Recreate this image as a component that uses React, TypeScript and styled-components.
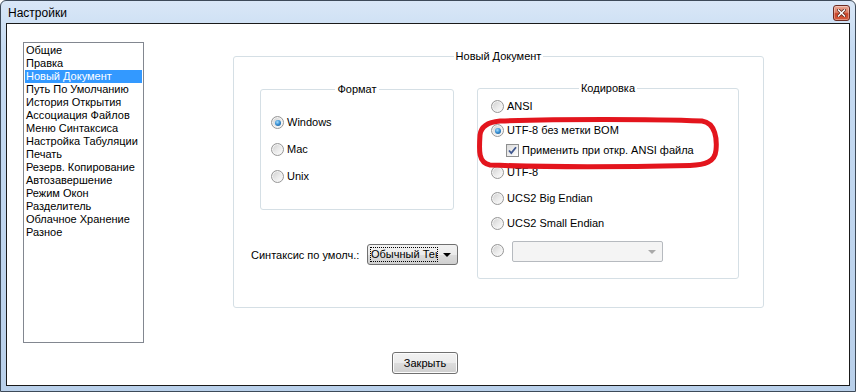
import styled, { createGlobalStyle } from "styled-components";

const GlobalStyle = createGlobalStyle`
  html, body {
    margin: 0;
    padding: 0;
    background: #fff;
  }
  body {
    font-family: "Liberation Sans", Arial, sans-serif;
    font-size: 11px;
    color: #000;
  }
  * {
    box-sizing: border-box;
  }
`;

const pages = [
  "Общие",
  "Правка",
  "Новый Документ",
  "Путь По Умолчанию",
  "История Открытия",
  "Ассоциация Файлов",
  "Меню Синтаксиса",
  "Настройка Табуляции",
  "Печать",
  "Резерв. Копирование",
  "Автозавершение",
  "Режим Окон",
  "Разделитель",
  "Облачное Хранение",
  "Разное",
];

const App = () => {
  return (
    <>
      <GlobalStyle />
      <Window>
        <TitleBar>
          <TitleText>Настройки</TitleText>
          <CloseButton aria-label="close">
            <svg width="9" height="8" viewBox="0 0 9 8">
              <path
                d="M1.5 1 L7.5 7 M7.5 1 L1.5 7"
                stroke="#5a2418"
                strokeWidth="3"
                strokeLinecap="square"
              />
              <path
                d="M1.5 1 L7.5 7 M7.5 1 L1.5 7"
                stroke="#fff"
                strokeWidth="1.5"
                strokeLinecap="square"
              />
            </svg>
          </CloseButton>
        </TitleBar>

        <Client>
          <Body>
            <ListBox>
              {pages.map((p) => (
                <ListItem key={p} $selected={p === "Новый Документ"}>
                  {p}
                </ListItem>
              ))}
            </ListBox>

            <Group $w={531} $h={252} $ml={89} $mt={14}>
              <GroupTitle>Новый Документ</GroupTitle>
              <GroupBody>
                <LeftColumn>
                  <Group $w={194} $h={121} $ml={9} $mt={0}>
                    <GroupTitle>Формат</GroupTitle>
                    <FormatList>
                      <OptionRow>
                        <Radio $checked />
                        <span>Windows</span>
                      </OptionRow>
                      <OptionRow>
                        <Radio />
                        <span>Mac</span>
                      </OptionRow>
                      <OptionRow>
                        <Radio />
                        <span>Unix</span>
                      </OptionRow>
                    </FormatList>
                  </Group>

                  <SyntaxRow>
                    <span>Синтаксис по умолч.:</span>
                    <Combo>
                      <ComboFocus>Обычный Текст</ComboFocus>
                      <ComboArrow $disabled={false} />
                    </Combo>
                  </SyntaxRow>
                </LeftColumn>

                <Group $w={262} $h={191} $ml={23} $mt={-1}>
                  <GroupTitle>Кодировка</GroupTitle>
                  <EncodingList>
                    <OptionRow $mt={5}>
                      <Radio />
                      <span>ANSI</span>
                    </OptionRow>
                    <OptionRow $mt={11}>
                      <Radio $checked />
                      <span>UTF-8 без метки BOM</span>
                    </OptionRow>
                    <CheckRow $mt={7}>
                      <Checkbox>
                        <svg width="11" height="11" viewBox="0 0 11 11">
                          <path
                            d="M2 5.5 L4.3 8 L9 2.2"
                            fill="none"
                            stroke="#3f578f"
                            strokeWidth="1.8"
                          />
                        </svg>
                      </Checkbox>
                      <span>Применить при откр. ANSI файла</span>
                    </CheckRow>
                    <OptionRow $mt={9}>
                      <Radio />
                      <span>UTF-8</span>
                    </OptionRow>
                    <OptionRow $mt={13}>
                      <Radio />
                      <span>UCS2 Big Endian</span>
                    </OptionRow>
                    <OptionRow $mt={12}>
                      <Radio />
                      <span>UCS2 Small Endian</span>
                    </OptionRow>
                    <OtherRow>
                      <Radio />
                      <DisabledCombo>
                        <ComboArrow $disabled />
                      </DisabledCombo>
                    </OtherRow>
                  </EncodingList>
                </Group>
              </GroupBody>
            </Group>
          </Body>

          <Footer>
            <PushButton>Закрыть</PushButton>
          </Footer>
        </Client>

        <Annotation width="856" height="392" viewBox="0 0 856 392">
          <path
            d="M500 121 C560 119, 650 119, 702 121 C716 123, 717 140, 716 150 C715 162, 705 165, 690 165.5 C620 167, 540 167, 490 165 C478 163, 479 150, 480 135 C481 126, 488 122, 500 121 Z"
            fill="none"
            stroke="#e3151d"
            strokeWidth="5"
          />
        </Annotation>
      </Window>
    </>
  );
};

const Window = styled.div`
  position: relative;
  width: 856px;
  height: 392px;
  border: 1px solid #3d4a59;
  border-radius: 6px 6px 0 0;
  background: linear-gradient(180deg, #d9e7f7 0%, #c6dbf2 12%, #bfd5ee 60%, #b9d0ea 100%);
  display: flex;
  flex-direction: column;
  padding: 0 5px 5px 5px;
`;

const TitleBar = styled.div`
  height: 22px;
  flex-shrink: 0;
  display: flex;
  justify-content: space-between;
  align-items: flex-start;
`;

const TitleText = styled.div`
  margin-top: 5px;
  padding-left: 2px;
  font-size: 12px;
  line-height: 14px;
  color: #000;
`;

const CloseButton = styled.div`
  margin-top: 4px;
  width: 17px;
  height: 16px;
  border: 1px solid #6b2b22;
  border-radius: 3px;
  background: linear-gradient(180deg, #eaa894 0%, #dc7c63 45%, #c9442a 55%, #d65a3a 100%);
  box-shadow: inset 0 0 0 1px rgba(255, 255, 255, 0.35);
  display: flex;
  align-items: center;
  justify-content: center;
`;

const Client = styled.div`
  flex: 1;
  background: #fff;
  border: 1px solid #1a1a1a;
  display: flex;
  flex-direction: column;
`;

const Body = styled.div`
  display: flex;
  align-items: flex-start;
  padding: 18px 0 0 16px;
`;

const ListBox = styled.div`
  width: 121px;
  height: 301px;
  flex-shrink: 0;
  border: 1px solid #828790;
  padding: 1px;
`;

const ListItem = styled.div<{ $selected: boolean }>`
  height: 13px;
  line-height: 13px;
  padding-left: 1px;
  white-space: nowrap;
  background: ${(p) => (p.$selected ? "#3399ff" : "transparent")};
  color: ${(p) => (p.$selected ? "#fff" : "#000")};
`;

const Group = styled.div<{ $w: number; $h: number; $ml: number; $mt: number }>`
  width: ${(p) => p.$w}px;
  height: ${(p) => p.$h}px;
  margin-left: ${(p) => p.$ml}px;
  margin-top: ${(p) => p.$mt}px;
  flex-shrink: 0;
  border: 1px solid #d5dfe5;
  border-radius: 3px;
  display: flex;
  flex-direction: column;
`;

const GroupTitle = styled.div`
  align-self: center;
  margin-top: -7px;
  height: 13px;
  line-height: 13px;
  padding: 0 2px;
  background: #fff;
  white-space: nowrap;
`;

const GroupBody = styled.div`
  display: flex;
  align-items: flex-start;
  padding-left: 17px;
  margin-top: 26px;
`;

const LeftColumn = styled.div`
  width: 203px;
  flex-shrink: 0;
  display: flex;
  flex-direction: column;
`;

const FormatList = styled.div`
  display: flex;
  flex-direction: column;
  gap: 14px;
  padding-left: 10px;
  margin-top: 20px;
`;

const EncodingList = styled.div`
  display: flex;
  flex-direction: column;
  padding-left: 13px;
`;

const OptionRow = styled.div<{ $mt?: number }>`
  display: flex;
  align-items: center;
  gap: 3px;
  height: 13px;
  line-height: 13px;
  margin-top: ${(p) => p.$mt ?? 0}px;
  white-space: nowrap;
`;

const CheckRow = styled(OptionRow)`
  padding-left: 15px;
  gap: 3px;
`;

const OtherRow = styled.div`
  display: flex;
  align-items: flex-start;
  gap: 8px;
  margin-top: 11px;

  & > span:first-child {
    margin-top: 3px;
  }
`;

const Radio = styled.span<{ $checked?: boolean }>`
  position: relative;
  width: 13px;
  height: 13px;
  flex-shrink: 0;
  border-radius: 50%;
  border: 1px solid #979797;
  background: linear-gradient(135deg, #cdcdcd 0%, #e9e9e9 50%, #ffffff 100%);
  box-shadow: inset 0 0 0 1px #f4f4f4;

  &::after {
    content: "";
    display: ${(p) => (p.$checked ? "block" : "none")};
    position: absolute;
    left: 2.5px;
    top: 2.5px;
    width: 6px;
    height: 6px;
    border-radius: 50%;
    background: radial-gradient(circle at 40% 35%, #a8defc 0%, #3c93d6 45%, #0f4c86 100%);
  }
`;

const Checkbox = styled.span`
  width: 13px;
  height: 13px;
  flex-shrink: 0;
  border: 1px solid #8e8f8f;
  background: linear-gradient(135deg, #dadada 0%, #f0f0f0 60%, #ffffff 100%);
  display: flex;
  align-items: center;
  justify-content: center;
`;

const SyntaxRow = styled.div`
  display: grid;
  grid-template-columns: 116px 91px;
  align-items: center;
  margin-top: 34px;
  white-space: nowrap;
`;

const Combo = styled.div`
  width: 91px;
  height: 21px;
  border: 1px solid #707070;
  border-radius: 3px;
  background: linear-gradient(180deg, #f2f2f2 0%, #ebebeb 50%, #dddddd 50%, #cfcfcf 100%);
  display: flex;
  align-items: center;
  padding: 2px 6px 2px 2px;
`;

const ComboFocus = styled.div`
  width: 68px;
  height: 15px;
  line-height: 13px;
  border: 1px dotted #000;
  overflow: hidden;
  white-space: nowrap;
`;

const ComboArrow = styled.span<{ $disabled: boolean }>`
  margin-left: auto;
  width: 0;
  height: 0;
  border-left: 4px solid transparent;
  border-right: 4px solid transparent;
  border-top: 4px solid ${(p) => (p.$disabled ? "#a9a9a9" : "#000")};
`;

const DisabledCombo = styled.div`
  width: 151px;
  height: 21px;
  border: 1px solid #b6babf;
  border-radius: 2px;
  background: #f4f4f4;
  display: flex;
  align-items: center;
  padding-right: 6px;
`;

const Footer = styled.div`
  display: flex;
  justify-content: center;
  padding-right: 6px;
  margin-top: 9px;
`;

const PushButton = styled.div`
  width: 66px;
  height: 22px;
  border: 1px solid #707070;
  border-radius: 3px;
  background: linear-gradient(180deg, #f2f2f2 0%, #ebebeb 50%, #dddddd 50%, #cfcfcf 100%);
  box-shadow: inset 0 0 0 1px #fcfcfc;
  display: flex;
  align-items: center;
  justify-content: center;
  font-size: 11px;
`;

const Annotation = styled.svg`
  position: absolute;
  left: -1px;
  top: -1px;
  pointer-events: none;
`;

export default App;
